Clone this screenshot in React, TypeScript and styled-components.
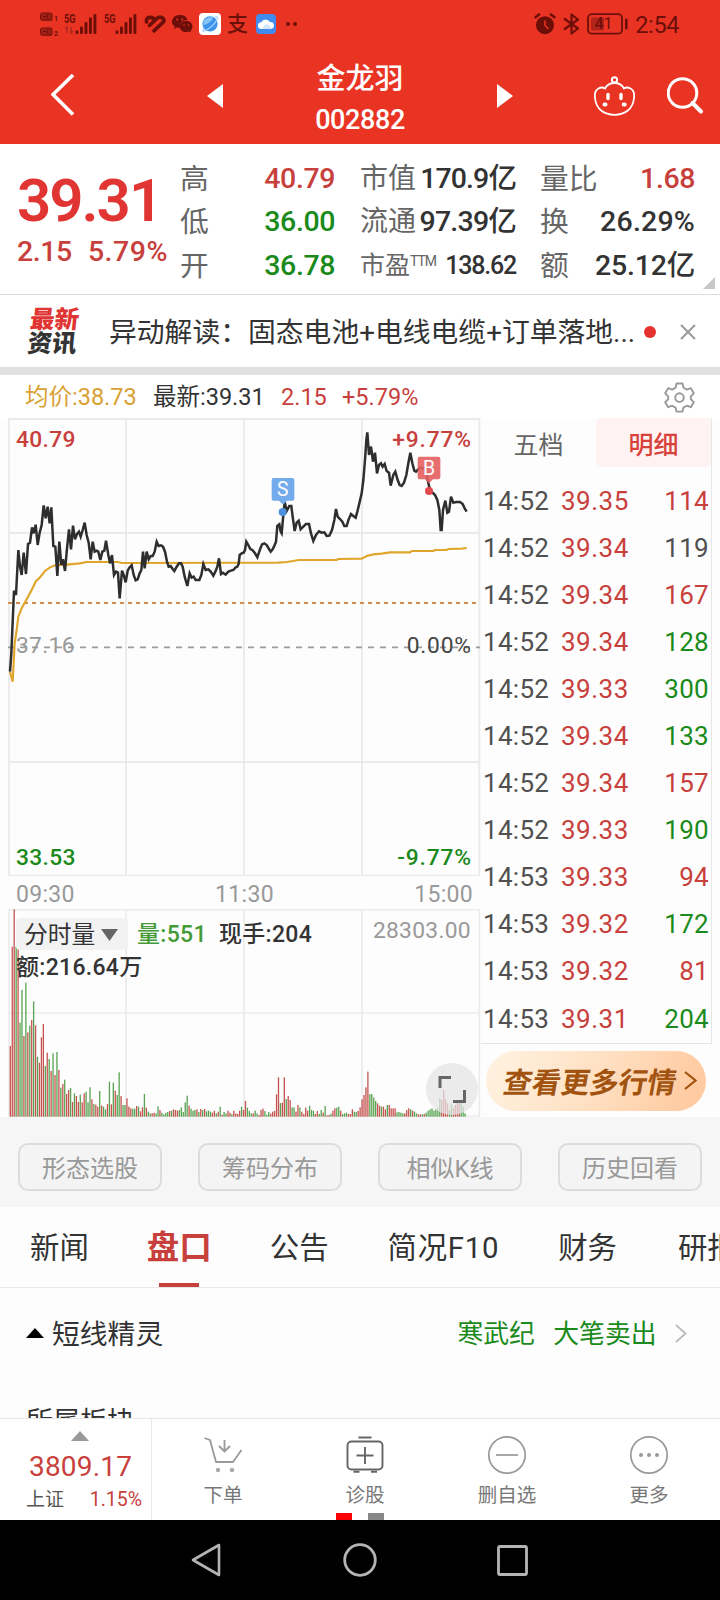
import React from 'react';
import styled, { createGlobalStyle } from 'styled-components';

const RED = '#c8403c';
const GREEN = '#1a8a1a';
const INK = '#333333';
const GREY = '#999999';

const GlobalStyle = createGlobalStyle`
  * { box-sizing: border-box; }
  body {
    margin: 0;
    background: #fff;
    font-family: Roboto, "Noto Sans CJK SC", sans-serif;
    color: ${INK};
  }
`;

const Screen = styled.div`
  width: 720px;
  height: 1600px;
  overflow: hidden;
  display: flex;
  flex-direction: column;
  background: #fdfdfd;
  white-space: nowrap;
`;

/* ---------- header ---------- */

const Header = styled.header`
  height: 144px;
  background: #e93424;
  display: flex;
  flex-direction: column;
  flex: none;
`;

const StatusBar = styled.div`
  height: 48px;
  display: flex;
  justify-content: space-between;
  align-items: center;
  padding: 0 41px 0 40px;
  color: #6d0f08;
`;

const StatusGroup = styled.div<{ $gap: number }>`
  display: flex;
  align-items: center;
  gap: ${p => p.$gap}px;
  svg { overflow: visible; }
`;

const AlipayMark = styled.span`
  font-size: 21px;
  line-height: 24px;
  font-weight: 500;
  width: 23px;
`;

const Clock = styled.span`
  font-size: 23.5px;
  line-height: 26px;
  letter-spacing: -0.4px;
  padding-top: 2px;
`;

const TitleBar = styled.div`
  flex: 1;
  display: grid;
  grid-template-columns: 51px 156px 16px 1fr 16px 81px 73px 53px;
  align-items: center;
`;

const TitleBlock = styled.div`
  display: flex;
  flex-direction: column;
  align-items: center;
  color: #fff;
  padding-top: 8px;
`;

const StockName = styled.div`
  font-size: 29px;
  line-height: 40px;
  font-weight: 500;
`;

const StockCode = styled.div`
  font-size: 27px;
  line-height: 42px;
  font-weight: 500;
  letter-spacing: -0.4px;
`;

/* ---------- quote summary ---------- */

const Quote = styled.section`
  position: relative;
  height: 151px;
  flex: none;
  display: grid;
  grid-template-columns: 163px 154px 155px 154px;
  column-gap: 0;
  padding: 13px 0 0 18px;
  border-bottom: 1px solid #dcdcdc;
  background: #fff;
`;

const PriceBlock = styled.div`
  color: #e03532;
  padding-top: 12px;
`;

const LastPrice = styled.div`
  font-size: 60px;
  line-height: 64px;
  font-weight: 600;
  letter-spacing: -2px;
  margin-left: -1px;
`;

const ChangeRow = styled.div`
  display: flex;
  gap: 16px;
  font-size: 28.5px;
  line-height: 37px;
  font-weight: 500;
  margin-left: -1px;
  color: ${RED};
  span:first-child { letter-spacing: -0.4px; }
  span:last-child { letter-spacing: 0.5px; }
`;

const StatColumn = styled.div<{ $indent?: number }>`
  display: grid;
  grid-template-rows: repeat(3, 43.5px);
  margin-left: ${p => p.$indent ?? 0}px;
  margin-right: ${p => -(p.$indent ?? 0)}px;
`;

const Stat = styled.div`
  display: flex;
  justify-content: space-between;
  align-items: center;
`;

const StatLabel = styled.span<{ $size?: number }>`
  font-size: ${p => p.$size ?? 28.8}px;
  line-height: 40px;
  color: #666;
  margin-left: -1px;
  sup { font-size: 14px; line-height: 0; vertical-align: 8px; letter-spacing: -1px; }
`;

const StatValue = styled.span<{ $color?: string; $size?: number; $track?: number }>`
  font-size: ${p => p.$size ?? 28.5}px;
  line-height: 40px;
  font-weight: 500;
  letter-spacing: ${p => p.$track ?? -0.4}px;
  color: ${p => p.$color ?? INK};
`;

const Corner = styled.i`
  position: absolute;
  right: 5px;
  bottom: 5px;
  border-left: 12px solid transparent;
  border-bottom: 12px solid #c8c8c8;
`;

/* ---------- news ---------- */

const News = styled.section`
  height: 80px;
  flex: none;
  border-bottom: 8px solid #e0e0e0;
  display: flex;
  align-items: center;
  padding: 1px 0 0 29px;
  background: #fff;
`;

const NewsBadge = styled.div`
  width: 80px;
  font-size: 24.5px;
  line-height: 24px;
  font-weight: 900;
  transform: skewX(-6deg);
  padding-top: 1px;
  color: ${INK};
  em { font-style: normal; display: block; color: #e03532; }
`;

const NewsTitle = styled.div`
  font-size: 27.8px;
  line-height: 40px;
  width: 535px;
  padding-top: 3px;
`;

const Dot = styled.i`
  width: 12px;
  height: 12px;
  border-radius: 50%;
  background: #e5322e;
  margin-right: 24px;
`;

/* ---------- chart area ---------- */

const InfoRow = styled.div`
  height: 43px;
  flex: none;
  display: flex;
  align-items: center;
  padding: 1px 25px 0 25px;
  font-size: 23.5px;
  line-height: 36px;
  color: ${RED};
  background: #fff;
  svg { margin-left: auto; }
`;

const InfoItem = styled.span<{ $color?: string; $width: number }>`
  width: ${p => p.$width}px;
  color: ${p => p.$color ?? RED};
`;

const Market = styled.section`
  height: 699px;
  flex: none;
  display: flex;
  padding-left: 8px;
`;

const Charts = styled.div`
  width: 473px;
  display: flex;
  flex-direction: column;
`;

const ChartBox = styled.div<{ $height: number }>`
  position: relative;
  height: ${p => p.$height}px;
  > svg { display: block; }
`;

const ChartLabels = styled.div<{ $top: number; $color?: string; $weight?: number }>`
  position: absolute;
  left: 8px;
  right: 10px;
  top: ${p => p.$top}px;
  display: flex;
  justify-content: space-between;
  font-size: 22.8px;
  line-height: 28px;
  letter-spacing: 0.3px;
  font-weight: ${p => p.$weight ?? 500};
  color: ${p => p.$color ?? GREY};
`;

const Percent = styled.span<{ $color?: string }>`
  letter-spacing: 0.8px;
  margin-right: -0.8px;
  color: ${p => p.$color ?? 'inherit'};
`;

const Tint = styled.span<{ $color: string }>`
  color: ${p => p.$color};
`;

const TimeAxis = styled.div`
  height: 33px;
  display: flex;
  justify-content: space-between;
  align-items: center;
  padding: 3px 8px 0 8px;
  font-size: 23px;
  letter-spacing: 0.3px;
  color: ${GREY};
`;

const VolumeLegend = styled.div`
  position: absolute;
  left: 8px;
  top: 8px;
  font-size: 23px;
  line-height: 32px;
  font-weight: 500;
  letter-spacing: 0.3px;
`;

const LegendLine = styled.div`
  display: flex;
  align-items: center;
  height: 33px;
  > span { padding-top: 3px; }
`;

const Picker = styled.div`
  display: flex;
  align-items: center;
  gap: 6px;
  width: 112px;
  height: 32px;
  padding: 3px 0 0 8px;
  background: #f2f2f2;
  border-radius: 4px;
  font-size: 23.8px;
  font-weight: 400;
  letter-spacing: 0;
  margin-right: 9px;
`;

const LegendItem = styled.span<{ $width?: number }>`
  width: ${p => (p.$width ? `${p.$width}px` : 'auto')};
`;

const Expand = styled.div`
  position: absolute;
  left: 418px;
  top: 154px;
  width: 52px;
  height: 52px;
  border-radius: 50%;
  background: rgba(228, 228, 228, 0.75);
`;

/* ---------- order panel ---------- */

const Orders = styled.aside`
  width: 231px;
  display: flex;
  flex-direction: column;
`;

const OrderList = styled.div`
  height: 626px;
  border-right: 1px solid #e6e6e6;
  border-bottom: 1px solid #e6e6e6;
`;

const OrderTabs = styled.div`
  display: grid;
  grid-template-columns: 115px 115px;
  height: 59.5px;
  align-items: start;
`;

const OrderTab = styled.div<{ $active?: boolean }>`
  height: 49px;
  display: flex;
  align-items: center;
  justify-content: center;
  font-size: 25px;
  border-radius: 5px;
  color: ${p => (p.$active ? '#d8423c' : '#666')};
  background: ${p => (p.$active ? '#fef3f2' : 'transparent')};
  font-weight: ${p => (p.$active ? 500 : 400)};
`;

const OrderRow = styled.div`
  height: 47.05px;
  display: grid;
  grid-template-columns: 78px 74px 1fr;
  align-items: center;
  padding: 0 2px 0 2px;
  font-size: 26px;
  letter-spacing: 0.3px;
  color: #505050;
`;

const OrderPrice = styled.span`
  letter-spacing: 0.5px;
  color: ${RED};
`;

const OrderCount = styled.span<{ $color: string }>`
  text-align: right;
  color: ${p => p.$color};
`;

const MoreButton = styled.div`
  width: 220px;
  height: 60px;
  margin: 7px 0 0 5px;
  border-radius: 30px;
  background: linear-gradient(115deg, #fff3e2 0%, #ffe0c2 50%, #ffcba2 90%);
  display: flex;
  align-items: center;
  gap: 7px;
  padding: 0 0 2px 18px;
  font-size: 28.8px;
  font-weight: 700;
  color: #a1530f;
  span { transform: skewX(-10deg); }
`;

/* ---------- lower sections ---------- */

const Tools = styled.section`
  height: 90px;
  flex: none;
  background: #f6f6f6;
  display: flex;
  justify-content: space-between;
  padding: 26px 18px 0;
`;

const ToolButton = styled.div`
  width: 144px;
  height: 48px;
  border: 2px solid #dcdcdc;
  border-radius: 10px;
  background: #f4f4f4;
  display: flex;
  align-items: center;
  justify-content: center;
  font-size: 24px;
  padding-bottom: 2px;
  color: ${GREY};
`;

const Tabs = styled.nav`
  height: 81px;
  flex: none;
  display: flex;
  border-bottom: 1px solid #e8e8e8;
  padding-left: 30px;
  overflow: hidden;
`;

const Tab = styled.div<{ $gap: number; $active?: boolean; $track?: number }>`
  flex: none;
  display: flex;
  flex-direction: column;
  align-items: center;
  justify-content: space-between;
  margin-right: ${p => p.$gap}px;
  font-size: ${p => (p.$active ? 32.5 : 29.4)}px;
  line-height: 83px;
  letter-spacing: ${p => p.$track ?? 0}px;
  font-weight: ${p => (p.$active ? 700 : 400)};
  color: ${p => (p.$active ? RED : INK)};
  span { height: 76px; }
  i { width: 40px; height: 4px; background: ${RED}; }
`;

const Genie = styled.div`
  height: 92px;
  flex: none;
  display: flex;
  align-items: center;
  padding: 0 33px 2px 26px;
  font-size: 27.8px;
`;

const GenieTitle = styled.span`
  margin-left: 8px;
  flex: 1;
  padding-bottom: 2px;
`;

const GenieTag = styled.span`
  color: ${GREEN};
  font-size: 25.8px;
  margin-right: 18.5px;
  padding-bottom: 3px;
`;

const Sector = styled.div`
  height: 38px;
  flex: none;
  overflow: hidden;
  padding: 22px 0 0 26px;
  font-size: 27px;
  line-height: 40px;
`;

const Dock = styled.footer`
  position: relative;
  height: 102px;
  flex: none;
  display: grid;
  grid-template-columns: 152px repeat(4, 142px);
  border-top: 1px solid #e8e8e8;
  background: #fff;
`;

const IndexCell = styled.div`
  border-right: 1px solid #e8e8e8;
  display: flex;
  flex-direction: column;
  color: ${RED};
  > svg { margin: 12px 0 0 71px; display: block; flex: none; }
`;

const IndexValue = styled.div`
  font-size: 28px;
  line-height: 40px;
  letter-spacing: 0.2px;
  margin: 6px 0 0 29px;
`;

const IndexChange = styled.div`
  display: flex;
  justify-content: space-between;
  padding: 1px 9px 0 26px;
  font-size: 19.5px;
  line-height: 24px;
  b { font-weight: 400; color: #555; font-size: 19px; }
`;

const DockItem = styled.div`
  display: flex;
  flex-direction: column;
  align-items: center;
  font-size: 19.5px;
  line-height: 28px;
  color: #777;
  padding-top: 16px;
  gap: 7px;
`;

const Pager = styled.div`
  position: absolute;
  left: 336px;
  bottom: 0;
  display: flex;
  gap: 16px;
  i { width: 16px; height: 7px; background: #888; }
  i:first-child { background: #f00; }
`;

const NavBar = styled.div`
  height: 80px;
  flex: none;
  background: #000;
  display: flex;
  justify-content: center;
  align-items: center;
  gap: 120px;
  padding-right: 2px;
`;

/* ---------- data ---------- */

/* Chart data is plotted on a grid of three units per pixel. */
const PRICE =
  '30,815 34,760 42,572 48,585 55,450 60,500 65,525 71,458 78,522 84,432 90,428 96,382 101,400 107,374 113,435 119,398 125,375 131,316 137,355 143,320 149,370 154,322 160,438 166,440 172,528 178,425 184,495 189,478 195,513 201,445 207,388 213,448 219,377 225,418 231,402 237,395 242,410 248,390 254,368 260,405 266,428 272,478 278,425 284,455 290,452 295,455 301,480 307,455 313,452 318,422 325,465 330,490 336,465 342,525 348,515 354,518 359,595 366,512 371,525 377,547 383,512 389,502 395,496 401,525 407,541 413,538 419,520 424,510 429,455 434,505 440,455 446,478 452,468 458,468 464,455 470,425 476,438 483,436 489,440 495,455 501,485 506,500 512,498 518,507 523,513 530,500 537,490 543,490 548,500 554,530 562,558 569,520 575,533 581,530 587,540 598,540 604,525 610,492 617,510 625,508 632,515 640,527 646,515 652,500 657,475 663,522 669,518 677,524 685,515 693,512 700,510 706,503 712,500 716,492 719,465 725,460 731,458 735,450 739,425 745,435 751,447 757,450 765,460 772,472 780,448 786,433 793,430 800,435 807,447 812,455 818,448 824,435 828,425 832,378 838,373 842,395 845,400 850,345 854,305 860,333 868,318 874,318 878,350 884,393 890,368 896,362 902,388 910,380 918,372 927,372 933,400 940,423 948,405 957,394 965,398 973,397 980,408 988,407 996,390 1003,360 1008,327 1013,350 1020,357 1027,365 1033,378 1040,378 1046,358 1053,342 1060,348 1067,353 1072,335 1078,310 1085,280 1090,240 1095,180 1099,120 1102,97 1107,165 1113,140 1119,185 1125,158 1131,220 1137,195 1143,190 1148,200 1154,192 1160,213 1167,218 1172,257 1180,225 1186,215 1193,240 1199,255 1205,258 1212,248 1219,225 1225,190 1231,158 1237,190 1243,212 1248,215 1260,203 1275,205 1282,235 1288,262 1295,275 1305,285 1312,300 1318,330 1322,390 1325,390 1329,330 1336,302 1342,338 1347,335 1353,290 1360,308 1370,306 1380,306 1388,312 1394,325 1400,335';

const AVERAGE =
  '30,815 38,845 44,730 50,690 55,650 65,625 80,598 95,570 107,545 120,532 135,513 150,502 165,496 200,494 240,490 260,486 355,486 365,489 835,488 860,486 880,483 895,480 1010,480 1015,477 1085,476 1100,468 1120,463 1145,461 1170,457 1230,457 1235,453 1300,453 1305,450 1340,450 1345,447 1385,446 1400,444';

/* One entry per minute: bar top followed by its direction (r up, g down). */
const VOLUME =
  '618r 320r 208r 320g 250r 548g 450g 588r 428g 577r 557g 540r 484g 556r 650g 668r 592r 552r 678g 638r 657g 693r 640g 705r 636g 690r 743g 732r 719g 762r 750r 744g 786r 760g 768r 786r 764g 787r 760r 755g 787g 742g 778r 792g 794r 800r 753g 797r 800g 808g 792r 725g 793r 728g 752r 765g 697g 768r 795g 795g 775r 800r 805r 806g 806g 798r 800g 814r 802r 762g 803r 815g 820g 820r 818r 820g 799g 810r 818g 823g 818g 816g 813r 812g 808r 810r 812r 810g 802g 816g 787g 767g 797r 806g 812g 810g 808r 816g 807r 810g 807r 814g 812g 815g 818r 812r 820g 815r 800g 824r 816g 820g 812r 818r 822g 812r 820r 822r 812r 800g 810r 783r 803g 813g 820g 820r 812g 820g 825r 810r 806r 813g 824g 816g 821r 815r 813r 763r 712r 789g 788r 712r 777g 768r 780r 802g 802g 815r 795r 802g 815r 822r 803r 812r 797g 810g 812g 822r 813r 822g 810g 818r 798g 826r 825r 821g 812r 805r 803g 800g 812r 822g 820g 818g 822r 822r 808r 815g 816g 813r 802r 778r 765r 742r 695r 763g 762g 773g 783g 790r 797r 800g 800r 808r 795g 795r 805r 805r 805r 817g 816g 818g 820g 820r 810r 805r 808g 812r 815g 820g 823r 823r 823g 822r 818g 812g 808g 805g 812g 808g 805g 775g 780r 750r 778r 790r 810g 793g 805r 795r 788r 790r 785g 800g 820g'
    .split(' ')
    .map(v => ({ top: parseInt(v, 10), up: v.endsWith('r') }));

const TRADES: [string, string, string, string][] = [
  ['14:52', '39.35', '114', RED],
  ['14:52', '39.34', '119', '#505050'],
  ['14:52', '39.34', '167', RED],
  ['14:52', '39.34', '128', GREEN],
  ['14:52', '39.33', '300', GREEN],
  ['14:52', '39.34', '133', GREEN],
  ['14:52', '39.34', '157', RED],
  ['14:52', '39.33', '190', GREEN],
  ['14:53', '39.33', '94', RED],
  ['14:53', '39.32', '172', GREEN],
  ['14:53', '39.32', '81', RED],
  ['14:53', '39.31', '204', GREEN],
];

/* ---------- icons ---------- */

const HdIcon = () => (
  <svg width="18" height="24" viewBox="0 0 18 24" fill="none" stroke="currentColor">
    {[0, 15].map((y, i) => (
      <g key={y}>
        <rect x=".7" y={y + 1} width="11.200" height="7.200" rx="2" strokeWidth="1.200" fill="#c02a1e" />
        <text x="2.200" y={y + 7.300} fontSize="7.500" fontWeight="700" fill="currentColor" stroke="none" textLength="8.400" lengthAdjust="spacingAndGlyphs">HD</text>
        <text x="14" y={y + 8.500} fontSize="7" fontWeight="700" fill="currentColor" stroke="none">{i + 1}</text>
      </g>
    ))}
  </svg>
);

const SignalIcon = ({ data }: { data?: boolean }) => (
  <svg width="34" height="22" viewBox="0 0 34 22" fill="currentColor">
    <text x="0" y="9.600" fontSize="12.500" fontWeight="700" textLength="11.500" lengthAdjust="spacingAndGlyphs">5G</text>
    {data && <path d="M3 20v-6l-2 2M7 14v6l2-2" fill="none" stroke="#b0261b" strokeWidth="1.500" />}
    {[3.5, 7.5, 12, 16.5, 20].map((h, i) => (
      <rect key={h} x={11.5 + i * 4.5} y={21 - h} width="2.900" height={h} rx="1" />
    ))}
  </svg>
);

const HealthIcon = () => (
  <svg width="22" height="19" viewBox="0 0 22 19" fill="none" stroke="currentColor" strokeWidth="3.700" strokeLinecap="round">
    <path d="M2.600 7Q1.800 2.300 6 2.300T10.500 5.500" />
    <path d="M5.500 10.500L12.800 3.500Q16 .8 19 3.500" />
    <path d="M10 15.800L19.300 7Q20.500 5.500 19.500 4" />
  </svg>
);

const WechatIcon = () => (
  <svg width="21" height="18" viewBox="0 0 21 18">
    <path d="M7.800 0a7.800 6.500 0 0 0-5 11.500L2 14l3-1.500a9 7 0 0 0 3 .5c-1-5 3-8 7.500-8A7.800 6.500 0 0 0 7.800 0Z" fill="currentColor" />
    <path d="M14.200 6a6.500 5.500 0 1 0 2.500 10.500l2.500 1-.6-2A5.600 5.500 0 0 0 14.200 6Z" fill="currentColor" />
    <g fill="#e93424"><circle cx="5.200" cy="4.600" r="1" /><circle cx="10.200" cy="4.600" r="1" /><circle cx="12" cy="10" r=".8" /><circle cx="16.500" cy="10" r=".8" /></g>
  </svg>
);

const BrowserIcon = () => (
  <svg width="22" height="22" viewBox="0 0 22 22">
    <rect width="22" height="22" rx="4" fill="#fff" />
    <circle cx="11" cy="10.800" r="7.600" fill="#3b93ea" />
    <path d="M4.500 8Q8 3 14 4.500Q13 9 4.500 12.500Z" fill="#86c4f8" />
    <path d="M5 15.500Q2 19.500 6.500 17.500Q15 13 18 6.500Q19.500 2.500 15.500 4" fill="none" stroke="#9fd0ff" strokeWidth="1.300" />
  </svg>
);

const CloudIcon = () => (
  <svg width="20" height="20" viewBox="0 0 20 20">
    <rect width="20" height="20" rx="4" fill="#3f8bee" />
    <path d="M5.500 15a3.400 3.400 0 0 1-.3-6.800A5 5 0 0 1 14 8a3.500 3.500 0 0 1 .8 7Z" fill="#fff" />
    <path d="M7 15a3.800 3.800 0 0 1 6-3.800L16 15Z" fill="#d2e6fc" />
  </svg>
);

const AlarmIcon = () => (
  <svg width="22" height="22" viewBox="0 0 22 22" fill="none" stroke="currentColor" strokeLinecap="round">
    <circle cx="11" cy="12.200" r="9" fill="currentColor" stroke="none" />
    <path d="M1.500 4.200L5 1.500M20.500 4.200L17 1.500" strokeWidth="2.600" />
    <path d="M11 8v4.500l3 3" stroke="#e93424" strokeWidth="1.600" />
  </svg>
);

const BluetoothIcon = () => (
  <svg width="17" height="22" viewBox="0 0 17 22" fill="none" stroke="currentColor" strokeWidth="2.200" strokeLinejoin="round">
    <path d="M1 5.500L15 15.500L8.500 20.500V1.500L15 6.500L1 16.500" />
  </svg>
);

const BatteryIcon = () => (
  <svg width="41" height="22" viewBox="0 0 41 22">
    <rect x="1" y="1.200" width="34" height="19.500" rx="4" fill="none" stroke="currentColor" strokeWidth="1.800" />
    <rect x="4" y="4.500" width="13" height="13" rx="1" fill="#b0241a" />
    <rect x="38" y="5.500" width="2.600" height="11" rx="1" fill="currentColor" />
    <text x="7.500" y="16.200" fontSize="16" fontWeight="500" fill="currentColor">4<tspan fontWeight="400">1</tspan></text>
  </svg>
);

const MascotIcon = () => (
  <svg width="41" height="40" viewBox="0 0 41 40" fill="none" stroke="#fff" strokeWidth="1.800">
    <circle cx="20.500" cy="3.800" r="2.600" strokeWidth="2" />
    <path d="M11 12.500Q14 7 20.500 7T30 12.500Q33 10.500 36.500 12.500Q41 15 40 22C39 33 31 38.800 20.500 38.800S2 33 1 22Q0 15 4.500 12.500Q8 10.500 11 12.500Z" />
    <path d="M14 18.500v4M27 18.500v4" strokeWidth="3.400" strokeLinecap="round" />
    <path d="M10.500 28.500h1M29.700 28.500h1" strokeWidth="4" strokeLinecap="round" />
  </svg>
);

const SearchIcon = () => (
  <svg width="38" height="38" viewBox="0 0 38 38" fill="none" stroke="#fff" strokeLinecap="round">
    <circle cx="15.500" cy="16" r="14.300" strokeWidth="3" />
    <path d="M25.500 26l8.500 8.500" strokeWidth="4" />
  </svg>
);

const GearIcon = () => (
  <svg width="31" height="31" viewBox="0 0 31 31" fill="none" stroke="#999" strokeWidth="1.900" strokeLinejoin="round">
    <path d="M12.500 1.500h6l1 4.200 3.300 1.900 4-1.500 3 5.200-3 3v2.900l3 3-3 5-4-1.500-3.300 1.900-1 4h-6l-1-4-3.300-1.900-4 1.500-3-5 3-3v-2.900l-3-3 3-5.200 4 1.500 3.300-1.900Z" />
    <circle cx="15.500" cy="15.600" r="4.300" />
  </svg>
);

const Chevron = ({ w, h, color, stroke }: { w: number; h: number; color: string; stroke: number }) => (
  <svg width={w} height={h} viewBox={`0 0 ${w} ${h}`} fill="none" stroke={color} strokeWidth={stroke}>
    <path d={`M1 1L${w - 1.5} ${h / 2}L1 ${h - 1}`} />
  </svg>
);

const CartIcon = () => (
  <svg width="40" height="40" viewBox="0 0 40 40" fill="none" stroke="#999" strokeWidth="1.800">
    <path d="M1.500 3l5.500 2 6 22h17l8.500-12" strokeLinejoin="round" />
    <path d="M21.500 5v11M16 11l5.500 5.500L27 11" />
    <g fill="#aaa" stroke="none"><circle cx="15" cy="35" r="2.200" /><circle cx="29" cy="35" r="2.200" /></g>
  </svg>
);

const ClinicIcon = () => (
  <svg width="40" height="40" viewBox="0 0 40 40" fill="none" stroke="#666" strokeWidth="1.900">
    <path d="M13.500 2.500h13M20 12v17M11.500 20.500h17" />
    <rect x="2.500" y="6.500" width="35" height="28" rx="4" />
    <path d="M8.500 36.800h6M26 36.800h6" />
  </svg>
);

const CircleIcon = ({ dots }: { dots?: boolean }) => (
  <svg width="40" height="40" viewBox="0 0 40 40" fill="none" stroke="#999" strokeWidth="1.700">
    <circle cx="20" cy="20" r="18.200" />
    {dots ? (
      <g fill="#999" stroke="none"><circle cx="12" cy="20" r="2" /><circle cx="20" cy="20" r="2" /><circle cx="28" cy="20" r="2" /></g>
    ) : (
      <path d="M9 20h22" />
    )}
  </svg>
);

/* ---------- charts ---------- */

const PriceChart = () => (
  <svg width="473" height="458" viewBox="24 54 1419 1374" fill="none">
    <path d="M27 57H1438V1427H27ZM378 57V1427M732 57V1427M1086 57V1427" stroke="#ebebeb" strokeWidth="5.500" />
    <path d="M28 399H1438M28 1086H1438" stroke="#e4e4e4" strokeWidth="4" />
    <path d="M24 609H1430" stroke="#d88a48" strokeWidth="6" strokeDasharray="12 12" />
    <path d="M24 742H1440" stroke="#9c9c9c" strokeWidth="5.500" strokeDasharray="18 18" />
    <polyline points={AVERAGE} stroke="#e0a62c" strokeWidth="6.500" />
    <polyline points={PRICE} stroke="#2e2e2e" strokeWidth="7.500" />
    <circle cx="848" cy="336" r="12" fill="#4d90e0" />
    <path d="M821 234h56q6 0 6 6v56q0 6-6 6h-16l-12 12-12-12h-16q-6 0-6-6v-56q0-6 6-6Z" fill="#74abed" />
    <circle cx="1287" cy="273" r="12" fill="#e2494c" />
    <path d="M1259 170h56q6 0 6 6v56q0 6-6 6h-16l-12 12-12-12h-16q-6 0-6-6v-56q0-6 6-6Z" fill="#e65f61" fillOpacity=".9" />
    <g fill="#fff" fontSize="58" textAnchor="middle">
      <text x="848" y="288">S</text>
      <text x="1287" y="225">B</text>
    </g>
  </svg>
);

const VolumeChart = () => (
  <svg width="473" height="208" viewBox="24 207 1419 624" fill="none">
    <path d="M27 209H1438V828H27ZM378 209V828M732 209V828M1086 209V828M28 519H1438" stroke="#ebebeb" strokeWidth="5" />
    {VOLUME.map((v, i) => (
      <rect key={i} x={29 + i * 5.83} y={v.top} width="3.900" height={830 - v.top} fill={v.up ? '#c04440' : '#4a9a42'} fillOpacity=".92" />
    ))}
  </svg>
);

export default function App() {
  return (
    <Screen>
      <GlobalStyle />
      <Header>
        <StatusBar>
          <StatusGroup $gap={6}>
            <HdIcon />
            <SignalIcon data />
            <SignalIcon />
            <HealthIcon />
            <WechatIcon />
            <BrowserIcon />
            <AlipayMark>支</AlipayMark>
            <CloudIcon />
            <svg width="16" height="6" viewBox="0 0 16 6" fill="currentColor"><circle cx="6" cy="3" r="2" /><circle cx="13" cy="3" r="2" /></svg>
          </StatusGroup>
          <StatusGroup $gap={7}>
            <AlarmIcon />
            <BluetoothIcon />
            <BatteryIcon />
            <Clock>2:54</Clock>
          </StatusGroup>
        </StatusBar>
        <TitleBar>
          <span />
          <svg width="24" height="44" viewBox="0 0 24 44" fill="none" stroke="#fff" strokeWidth="3.600">
            <path d="M22 1L2 20.500L22 40.500" />
          </svg>
          <svg width="16" height="24"><path d="M16 0V24L0 12Z" fill="#fff" /></svg>
          <TitleBlock>
            <StockName>金龙羽</StockName>
            <StockCode>002882</StockCode>
          </TitleBlock>
          <svg width="16" height="24"><path d="M0 0V24L16 12Z" fill="#fff" /></svg>
          <span />
          <MascotIcon />
          <SearchIcon />
        </TitleBar>
      </Header>

      <Quote>
        <PriceBlock>
          <LastPrice>39.31</LastPrice>
          <ChangeRow><span>2.15</span><span>5.79%</span></ChangeRow>
        </PriceBlock>
        <StatColumn>
          <Stat><StatLabel>高</StatLabel><StatValue $color={RED}>40.79</StatValue></Stat>
          <Stat><StatLabel>低</StatLabel><StatValue $color={GREEN}>36.00</StatValue></Stat>
          <Stat><StatLabel>开</StatLabel><StatValue $color={GREEN}>36.78</StatValue></Stat>
        </StatColumn>
        <StatColumn $indent={26}>
          <Stat><StatLabel $size={28}>市值</StatLabel><StatValue $track={-0.9}>170.9亿</StatValue></Stat>
          <Stat><StatLabel $size={28}>流通</StatLabel><StatValue $track={-0.8}>97.39亿</StatValue></Stat>
          <Stat><StatLabel $size={25}>市盈<sup>TTM</sup></StatLabel><StatValue $size={25} $track={-1.2}>138.62</StatValue></Stat>
        </StatColumn>
        <StatColumn $indent={51}>
          <Stat><StatLabel>量比</StatLabel><StatValue $color={RED}>1.68</StatValue></Stat>
          <Stat><StatLabel>换</StatLabel><StatValue $track={0.2}>26.29%</StatValue></Stat>
          <Stat><StatLabel>额</StatLabel><StatValue $track={-0.2}>25.12亿</StatValue></Stat>
        </StatColumn>
        <Corner />
      </Quote>

      <News>
        <NewsBadge><em>最新</em>资讯</NewsBadge>
        <NewsTitle>异动解读：固态电池+电线电缆+订单落地...</NewsTitle>
        <Dot />
        <svg width="16" height="16" fill="none" stroke="#999" strokeWidth="2"><path d="M1 1L15 15M15 1L1 15" /></svg>
      </News>

      <InfoRow>
        <InfoItem $width={128} $color="#d9a132">均价:38.73</InfoItem>
        <InfoItem $width={128} $color={INK}>最新:39.31</InfoItem>
        <InfoItem $width={61}>2.15</InfoItem>
        <InfoItem $width={90}>+5.79%</InfoItem>
        <GearIcon />
      </InfoRow>

      <Market>
        <Charts>
          <ChartBox $height={458}>
            <PriceChart />
            <ChartLabels $top={8} $color={RED}><span>40.79</span><Percent>+9.77%</Percent></ChartLabels>
            <ChartLabels $top={214} $weight={400}><span>37.16</span><Percent $color="#444">0.00%</Percent></ChartLabels>
            <ChartLabels $top={426} $color={GREEN}><span>33.53</span><Percent>-9.77%</Percent></ChartLabels>
          </ChartBox>
          <TimeAxis><span>09:30</span><span>11:30</span><span>15:00</span></TimeAxis>
          <ChartBox $height={208}>
            <VolumeChart />
            <ChartLabels $top={8} $weight={400}><span /><span>28303.00</span></ChartLabels>
            <VolumeLegend>
              <LegendLine>
                <Picker>分时量<svg width="17" height="12"><path d="M0 0H17L8.500 12Z" fill="#666" /></svg></Picker>
                <LegendItem $width={82}><Tint $color="#459a38">量:551</Tint></LegendItem>
                <LegendItem>现手:204</LegendItem>
              </LegendLine>
              <LegendLine><LegendItem>额:216.64万</LegendItem></LegendLine>
            </VolumeLegend>
            <Expand>
              <svg width="52" height="52" fill="none" stroke="#666" strokeWidth="3"><path d="M14 25V14.500H25M27 38.500H38.500V27" /></svg>
            </Expand>
          </ChartBox>
        </Charts>
        <Orders>
          <OrderList>
            <OrderTabs>
              <OrderTab>五档</OrderTab>
              <OrderTab $active>明细</OrderTab>
            </OrderTabs>
            {TRADES.map(([time, price, count, color], i) => (
              <OrderRow key={i}>
                <span>{time}</span>
                <OrderPrice>{price}</OrderPrice>
                <OrderCount $color={color}>{count}</OrderCount>
              </OrderRow>
            ))}
          </OrderList>
          <MoreButton><span>查看更多行情</span><Chevron w={13} h={19} color="#a1530f" stroke={2.2} /></MoreButton>
        </Orders>
      </Market>

      <Tools>
        <ToolButton>形态选股</ToolButton>
        <ToolButton>筹码分布</ToolButton>
        <ToolButton>相似K线</ToolButton>
        <ToolButton>历史回看</ToolButton>
      </Tools>

      <Tabs>
        <Tab $gap={58}>新闻</Tab>
        <Tab $gap={58} $active><span>盘口</span><i /></Tab>
        <Tab $gap={59}>公告</Tab>
        <Tab $gap={59} $track={0.7}>简况F10</Tab>
        <Tab $gap={61}>财务</Tab>
        <Tab $gap={0}>研报</Tab>
      </Tabs>

      <Genie>
        <svg width="18" height="10"><path d="M0 10L9 0L18 10Z" fill="#000" /></svg>
        <GenieTitle>短线精灵</GenieTitle>
        <GenieTag>寒武纪</GenieTag>
        <GenieTag>大笔卖出</GenieTag>
        <Chevron w={12} h={19} color="#bbb" stroke={1.8} />
      </Genie>
      <Sector>所属板块</Sector>

      <Dock>
        <IndexCell>
          <svg width="18" height="10"><path d="M0 10L9 0L18 10Z" fill="#999" /></svg>
          <IndexValue>3809.17</IndexValue>
          <IndexChange><b>上证</b><span>1.15%</span></IndexChange>
        </IndexCell>
        <DockItem><CartIcon />下单</DockItem>
        <DockItem><ClinicIcon />诊股</DockItem>
        <DockItem><CircleIcon />删自选</DockItem>
        <DockItem><CircleIcon dots />更多</DockItem>
        <Pager><i /><i /></Pager>
      </Dock>

      <NavBar>
        <svg width="32" height="34" viewBox="0 0 32 34" fill="none" stroke="#b4b4b4" strokeWidth="2.600" strokeLinejoin="round"><path d="M28 2V32L2 17Z" /></svg>
        <svg width="34" height="34" fill="none" stroke="#b4b4b4" strokeWidth="2.800"><circle cx="17" cy="17" r="15.300" /></svg>
        <svg width="31" height="31" fill="none" stroke="#b4b4b4" strokeWidth="2.800"><rect x="1.500" y="1.500" width="28" height="28" rx="1.500" /></svg>
      </NavBar>
    </Screen>
  );
}
